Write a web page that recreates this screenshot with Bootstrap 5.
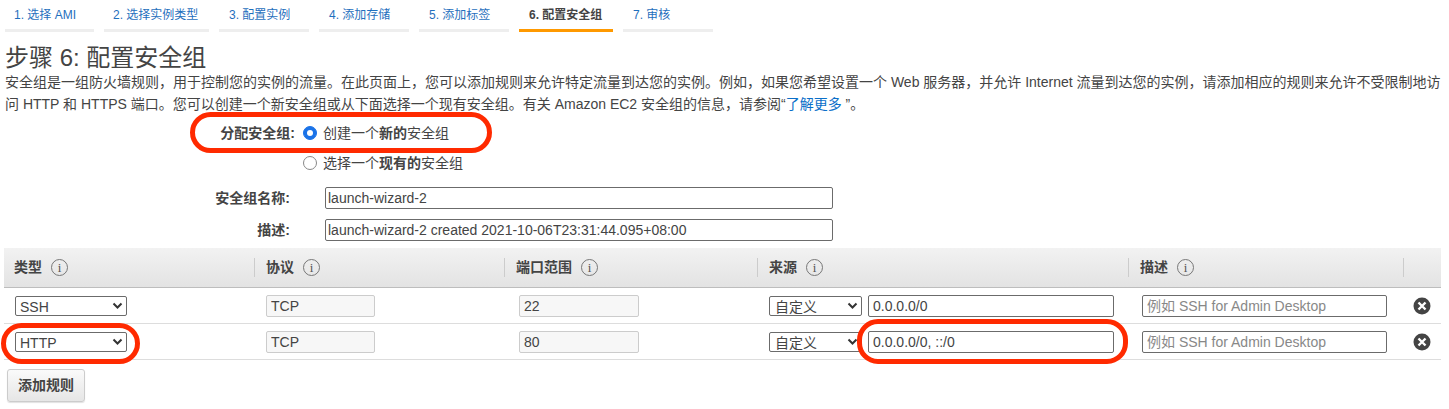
<!DOCTYPE html>
<html lang="zh-CN">
<head>
<meta charset="utf-8">
<title>步骤 6: 配置安全组</title>
<link href="https://cdn.jsdelivr.net/npm/bootstrap@5.3.0/dist/css/bootstrap.min.css" rel="stylesheet">
<style>
html,body{height:409px;overflow:hidden}
body{position:relative;background:#fff;color:#444;font-family:"Liberation Sans","Noto Sans CJK SC",sans-serif;font-size:14px;line-height:22px}
.wiz-tabs{padding:0 0 0 5px;height:32px;gap:10px}
.wiz-tab{display:block;flex:none;width:90px;height:32px;padding:0 10px;border-bottom:3px solid #eee;font-size:12px;line-height:31px;color:#1f6fbd;text-decoration:none;white-space:nowrap}
.wiz-tab:nth-child(1){width:89px;padding:0 9px}
.wiz-tab:nth-child(2){width:105px;padding:0 9px}
.wiz-tab.on{width:94px;border-bottom-color:#f90;color:#444;font-weight:700}
.step-title{font-size:24px;line-height:26px;font-weight:400;color:#444;margin:13px 0 0 5px}
.step-intro{margin:0 0 0 5px;width:1436px;line-height:22px;color:#444}
.step-intro a{color:#0b6fc9;text-decoration:none}
.assign-row{margin-top:3px;height:30px}
.fld-label{width:290px;text-align:right;font-weight:700;color:#444;flex:none;margin:0}
.assign-row .fld-label{width:295px}
.opt-wrap{padding-left:13px;height:30px;margin:0;min-height:0}
.assign-row .opt-wrap{padding-left:8px}
.opt-wrap .form-check-input{width:14px;height:14px;margin:0 6px 0 0;flex:none;border-color:#888}
.opt-wrap .form-check-input:checked{background-color:#1b73e8;border-color:#1b73e8}
.opt-row{padding-left:290px}
.name-row{height:32px}
.name-first{margin-top:4px}
.form-control.aws,.form-select.aws{height:22px;min-height:0;padding:0 4px;font-size:14px;line-height:20px;color:#444;border:1px solid #6b6b6b;border-radius:2px;box-shadow:none}
.fld-input.form-control.aws{width:508px;margin-left:35px;padding:0 2px}
.form-select.aws{height:20px;padding:0 16px 0 4px;background-size:11px 8px;background-position:right 3px center;background-image:url("data:image/svg+xml,%3csvg xmlns='http://www.w3.org/2000/svg' viewBox='0 0 11 8'%3e%3cpath fill='none' stroke='%23333' stroke-width='2' d='M1.5 1.5l4 4 4-4'/%3e%3c/svg%3e")}
.form-select.aws.c-src{padding-left:5px}
.form-control.aws.ro{background:#f7f7f7;border-color:#ccc;color:#444}
.form-control.aws::placeholder{color:#888}
.rule-wrap{margin:2px 0 0 4px;width:1437px}
.rule-table{table-layout:fixed;width:1437px;margin:0;border-collapse:separate;border-spacing:0}
.rule-table th{height:40px;padding:0;background:linear-gradient(#f2f2f2,#e3e3e3);border-bottom:1px solid #bdbdbd;font-weight:700;color:#444;vertical-align:middle}
.rule-table td{height:36px;padding:0;border-bottom:1px solid #ddd;vertical-align:middle;background:#fff;color:#444}
.head-cell{height:19px;line-height:19px;padding-left:10px;gap:9px}
.head-sep{border-left:1px solid #ccc;padding-left:11px}
.info-dot{width:17px;height:17px;border:1px solid #777;border-radius:50%;font:400 13px/15px "Liberation Serif",serif;color:#555;text-align:center;flex:none}
.c-type{width:112px;margin-left:11px}
.c-proto{width:109px;margin-left:12px}
.c-port{width:120px;margin-left:15px}
.c-src{width:93px;margin-left:12px}
.c-cidr{width:246px;margin-left:6px}
.c-desc{width:245px;margin-left:14px}
.del-x{display:block;margin-left:10px}
.add-rule{margin:9px 0 0 7px;width:78px;height:33px;padding:0;font-size:14px;font-weight:700;color:#444;background:linear-gradient(#fafafa,#e6e6e6);border:1px solid #ccc;border-radius:3px;box-shadow:0 1px 1px rgba(0,0,0,.12)}
.mark-ring{position:absolute;border:5px solid #ff2a00;border-radius:21px;pointer-events:none}
.ring-a{left:190px;top:112px;width:302px;height:41px}
.ring-b{left:1px;top:323px;width:139px;height:41px}
.ring-c{left:857px;top:319px;width:271px;height:45px}
</style>
</head>
<body>
<nav class="d-flex wiz-tabs">
<a class="wiz-tab" href="#">1. 选择 AMI</a>
<a class="wiz-tab" href="#">2. 选择实例类型</a>
<a class="wiz-tab" href="#">3. 配置实例</a>
<a class="wiz-tab" href="#">4. 添加存储</a>
<a class="wiz-tab" href="#">5. 添加标签</a>
<a class="wiz-tab on" href="#">6. 配置安全组</a>
<a class="wiz-tab" href="#">7. 审核</a>
</nav>
<h1 class="step-title">步骤 6: 配置安全组</h1>
<p class="step-intro">安全组是一组防火墙规则，用于控制您的实例的流量。在此页面上，您可以添加规则来允许特定流量到达您的实例。例如，如果您希望设置一个 Web 服务器，并允许 Internet 流量到达您的实例，请添加相应的规则来允许不受限制地访问 HTTP 和 HTTPS 端口。您可以创建一个新安全组或从下面选择一个现有安全组。有关 Amazon EC2 安全组的信息，请参阅“<a href="#">了解更多</a> ”。</p>
<form>
<div class="d-flex align-items-center assign-row">
<label class="fld-label">分配安全组:</label>
<label class="d-flex align-items-center opt-wrap"><input class="form-check-input" type="radio" name="sg" checked><span>创建一个<b>新的</b>安全组</span></label>
</div>
<div class="opt-row">
<label class="d-flex align-items-center opt-wrap"><input class="form-check-input" type="radio" name="sg"><span>选择一个<b>现有的</b>安全组</span></label>
</div>
<div class="d-flex align-items-center name-row name-first">
<label class="fld-label">安全组名称:</label>
<input class="form-control aws fld-input" value="launch-wizard-2">
</div>
<div class="d-flex align-items-center name-row">
<label class="fld-label">描述:</label>
<input class="form-control aws fld-input" value="launch-wizard-2 created 2021-10-06T23:31:44.095+08:00">
</div>
<div class="rule-wrap">
<table class="table rule-table">
<colgroup><col style="width:250px"><col style="width:250px"><col style="width:253px"><col style="width:371px"><col style="width:275px"><col style="width:38px"></colgroup>
<thead><tr>
<th><div class="d-flex align-items-center head-cell">类型 <span class="info-dot">i</span></div></th>
<th><div class="d-flex align-items-center head-cell head-sep">协议 <span class="info-dot">i</span></div></th>
<th><div class="d-flex align-items-center head-cell head-sep">端口范围 <span class="info-dot">i</span></div></th>
<th><div class="d-flex align-items-center head-cell head-sep">来源 <span class="info-dot">i</span></div></th>
<th><div class="d-flex align-items-center head-cell head-sep">描述 <span class="info-dot">i</span></div></th>
<th><div class="head-cell head-sep"></div></th>
</tr></thead>
<tbody>
<tr>
<td><select class="form-select aws c-type"><option>SSH</option></select></td>
<td><input class="form-control aws ro c-proto" value="TCP" readonly></td>
<td><input class="form-control aws ro c-port" value="22" readonly></td>
<td><div class="d-flex align-items-center"><select class="form-select aws c-src"><option>自定义</option></select><input class="form-control aws c-cidr" value="0.0.0.0/0"></div></td>
<td><input class="form-control aws c-desc" placeholder="例如 SSH for Admin Desktop"></td>
<td><svg class="del-x" width="18" height="18" viewBox="0 0 18 18"><circle cx="9" cy="9" r="8.5" fill="#444"/><path d="M5.5 5.5l7 7M12.5 5.5l-7 7" stroke="#fff" stroke-width="2.4"/></svg></td>
</tr>
<tr>
<td><select class="form-select aws c-type"><option>HTTP</option></select></td>
<td><input class="form-control aws ro c-proto" value="TCP" readonly></td>
<td><input class="form-control aws ro c-port" value="80" readonly></td>
<td><div class="d-flex align-items-center"><select class="form-select aws c-src"><option>自定义</option></select><input class="form-control aws c-cidr" value="0.0.0.0/0, ::/0"></div></td>
<td><input class="form-control aws c-desc" placeholder="例如 SSH for Admin Desktop"></td>
<td><svg class="del-x" width="18" height="18" viewBox="0 0 18 18"><circle cx="9" cy="9" r="8.5" fill="#444"/><path d="M5.5 5.5l7 7M12.5 5.5l-7 7" stroke="#fff" stroke-width="2.4"/></svg></td>
</tr>
</tbody>
</table>
</div>
<button type="button" class="btn add-rule d-block">添加规则</button>
</form>
<span class="mark-ring ring-a"></span>
<span class="mark-ring ring-b"></span>
<span class="mark-ring ring-c"></span>
</body>
</html>
